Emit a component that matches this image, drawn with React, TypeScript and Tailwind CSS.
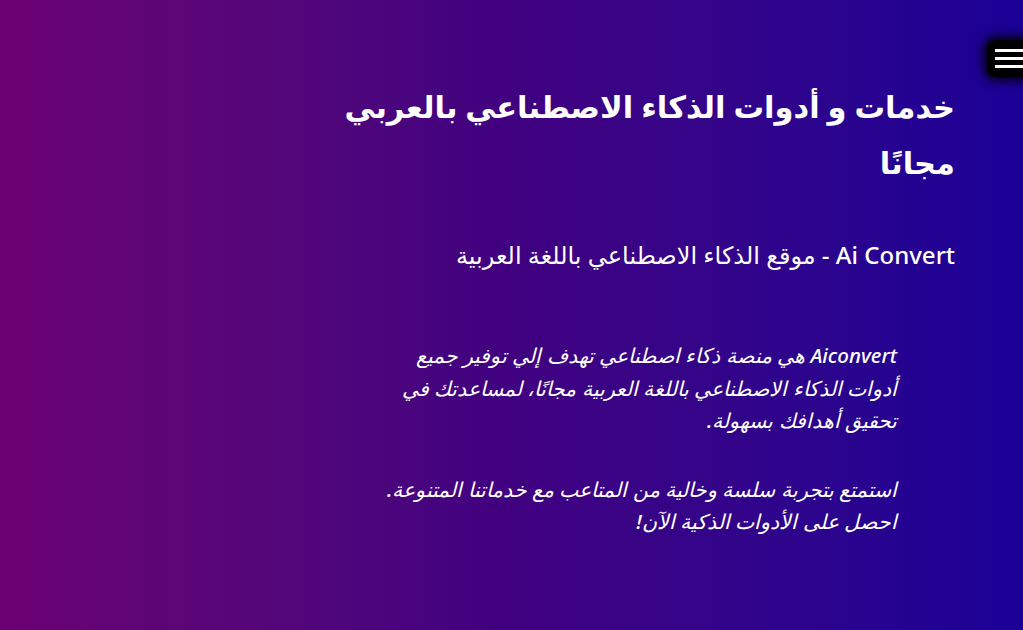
export default function App() {
  return (
    <div
      dir="rtl"
      className="relative min-h-[630px] w-full overflow-hidden bg-gradient-to-r from-[#6b0072] via-[#400080] to-[#1a0096] text-white"
      style={{ fontFamily: '"Noto Sans", "DejaVu Sans", sans-serif' }}
    >
      {/* menu button */}
      <button
        className="absolute right-[-12px] top-[40px] flex h-[37px] w-[48px] flex-col justify-center gap-[5px] rounded-[9px] bg-black pl-[8px] pr-0 shadow-[0_0_10px_4px_rgba(0,0,0,0.85)]"
        dir="ltr"
      >
        <span className="block h-[3px] w-full bg-white" />
        <span className="block h-[3px] w-full bg-white" />
        <span className="block h-[3px] w-full bg-white" />
      </button>

      <div className="pr-[68px] pt-[78px]">
        <h1 className="text-[30.5px] font-semibold leading-[56px]">
          خدمات و أدوات الذكاء الاصطناعي بالعربي
          <br />
          مجانًا
        </h1>

        <h2 className="mt-[47px] text-[24px] font-medium leading-[36px]">
          Ai Convert - موقع الذكاء الاصطناعي باللغة العربية
        </h2>

        <div className="mr-[58px] mt-[66px] text-[20.5px] font-medium italic leading-[32.5px]">
          <p>
            Aiconvert هي منصة ذكاء اصطناعي تهدف إلي توفير جميع
            <br />
            أدوات الذكاء الاصطناعي باللغة العربية مجانًا، لمساعدتك في
            <br />
            تحقيق أهدافك بسهولة.
          </p>
          <p className="mt-[36px]">
            استمتع بتجربة سلسة وخالية من المتاعب مع خدماتنا المتنوعة.
            <br />
            احصل على الأدوات الذكية الآن!
          </p>
        </div>
      </div>
    </div>
  )
}
